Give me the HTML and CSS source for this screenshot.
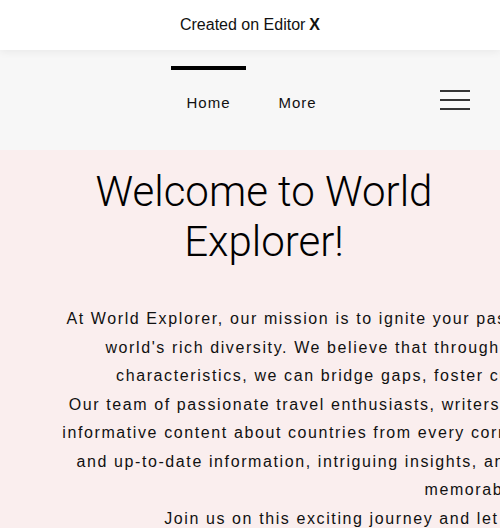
FILE: index.html
```html
<!DOCTYPE html>
<html lang="en">
<head>
<meta charset="utf-8">
<title>World Explorer</title>
<link rel="stylesheet" href="styles.css">
</head>
<body>
<div class="topbar">Created on Editor <b>X</b></div>
<nav class="nav">
  <div class="nav-side"></div>
  <div class="nav-links">
    <a class="nav-item active" href="#"><span class="indicator"></span><span class="label">Home</span></a>
    <a class="nav-item" href="#"><span class="indicator"></span><span class="label">More</span></a>
  </div>
  <div class="nav-side nav-right">
    <button class="burger" aria-label="Menu"><span></span><span></span><span></span></button>
  </div>
</nav>
<main class="hero">
  <h1 class="title">Welcome to World Explorer!</h1>
  <p class="intro">At World Explorer, our mission is to ignite your passion for exploration and inspire you all to discover the<br>world's rich diversity. We believe that through understanding various countries, and their unique<br>characteristics, we can bridge gaps, foster cultural appreciation, and promote global harmony<br>Our team of passionate travel enthusiasts, writers, and researchers work tirelessly to bring you the most<br>informative content about countries from every corner of the globe. We strive to provide you with accurate<br>and up-to-date information, intriguing insights, and captivating stories, that will make your travels truly<br>memorable and joyful.<br>Join us on this exciting journey and let us be your guide to the beauty of the world</p>
</main>
</body>
</html>
```
FILE: styles.css
```css
html, body {
  margin: 0;
  padding: 0;
  overflow: hidden;
}
body {
  font-family: "Liberation Sans", Arial, sans-serif;
  color: #111;
  background: #faeeee;
}
.topbar {
  position: relative;
  z-index: 2;
  height: 50px;
  background: #fff;
  display: flex;
  align-items: center;
  justify-content: center;
  font-size: 16px;
  color: #111;
  box-shadow: 0 2px 8px rgba(0, 0, 0, 0.06);
}
.topbar b {
  font-weight: 700;
  margin-left: 4px;
}
.nav {
  height: 100px;
  background: #f7f7f7;
  display: grid;
  grid-template-columns: 1fr auto 1fr;
}
.nav-links {
  display: flex;
  gap: 14px;
  padding-left: 6px;
}
.nav-item {
  width: 75px;
  display: flex;
  flex-direction: column;
  align-items: center;
  padding-top: 16px;
  text-decoration: none;
  color: #111;
}
.indicator {
  display: block;
  width: 100%;
  height: 4px;
}
.nav-item.active .indicator {
  background: #000;
}
.label {
  margin-top: 24px;
  font-size: 15px;
  letter-spacing: 1px;
  line-height: 17px;
}
.nav-right {
  display: flex;
  justify-content: flex-end;
  align-items: center;
}
.burger {
  margin-right: 30px;
  width: 30px;
  height: 20px;
  padding: 0;
  border: 0;
  background: none;
  display: flex;
  flex-direction: column;
  justify-content: space-between;
}
.burger span {
  display: block;
  height: 2px;
  width: 30px;
  background: #333;
}
.hero {
  width: 528px;
  box-sizing: border-box;
  padding: 17px 24px 0;
}
.title {
  margin: 0;
  font-family: Roboto, "Liberation Sans", sans-serif;
  font-weight: 300;
  font-size: 42px;
  line-height: 50px;
  text-align: center;
  color: #000;
}
.intro {
  width: 992px;
  margin: 38px 0 0;
  font-size: 16px;
  line-height: 28.5px;
  letter-spacing: 0.1em;
  text-align: center;
  white-space: nowrap;
  color: #111;
}
```
